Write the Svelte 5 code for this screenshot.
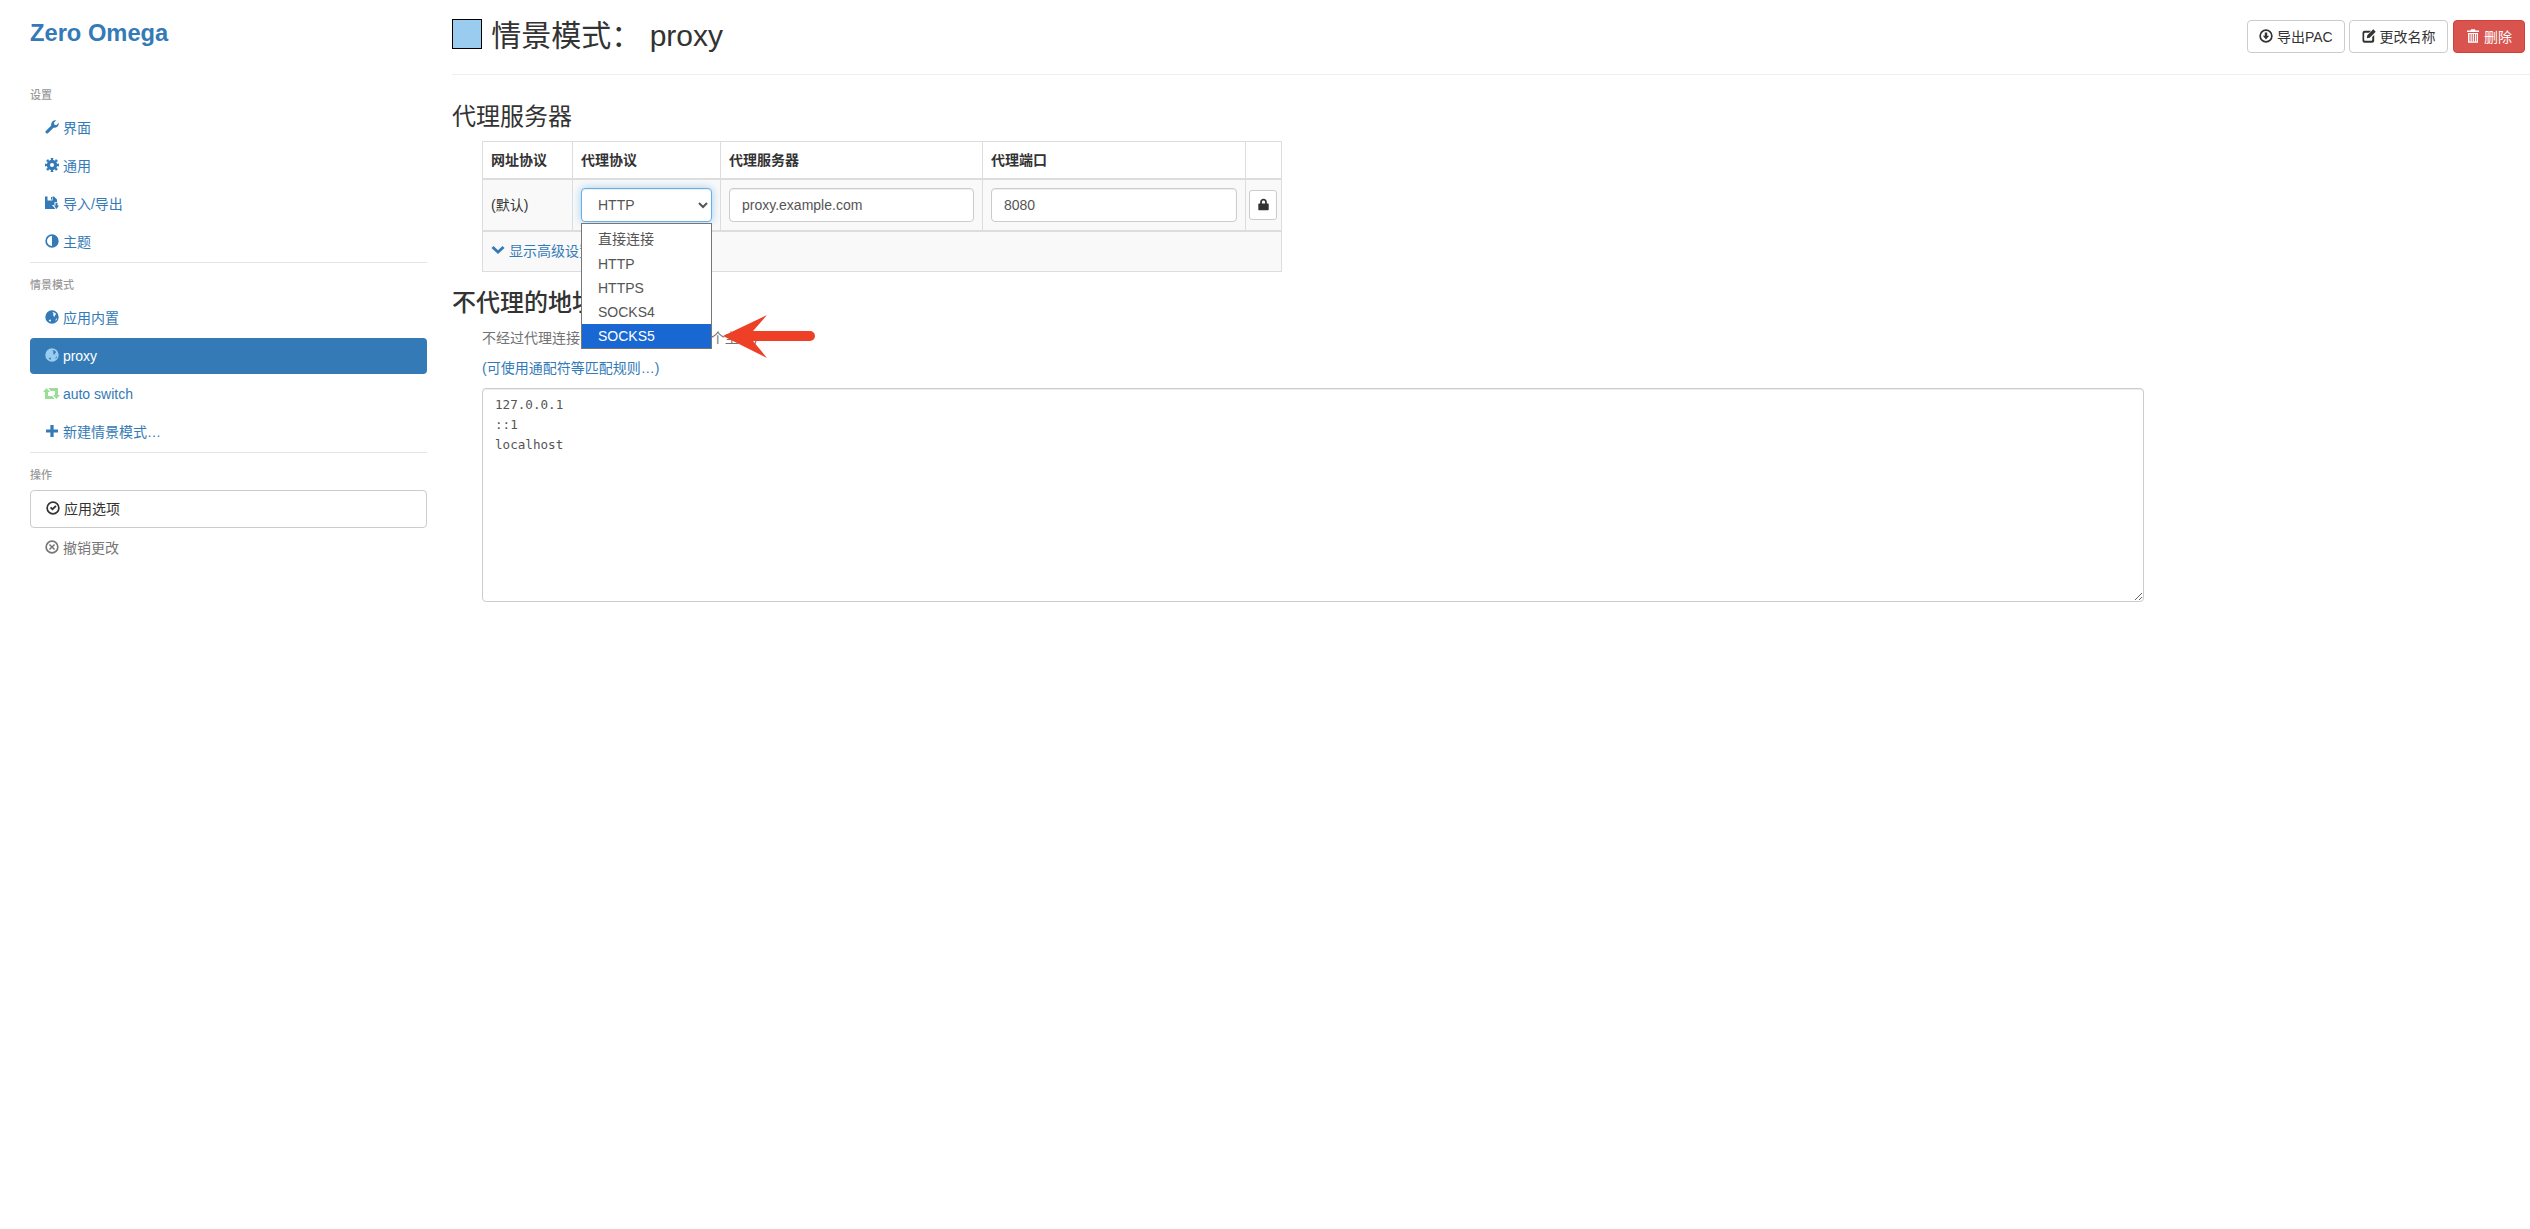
<script lang="ts">
	// Glyph-style icons, all on a 14 unit grid and filled with currentColor
	function cogPath() {
		let d = '';
		for (let i = 0; i < 16; i++) {
			const a = ((i - 0.55) * Math.PI) / 8;
			const r = i % 2 === 0 ? 7.2 : 5.3;
			const b = ((i + 0.55) * Math.PI) / 8;
			d += `${i === 0 ? 'M' : 'L'}${(7 + r * Math.cos(a)).toFixed(2)} ${(7 + r * Math.sin(a)).toFixed(2)}L${(7 + r * Math.cos(b)).toFixed(2)} ${(7 + r * Math.sin(b)).toFixed(2)}`;
		}
		return d + 'ZM7 5a2 2 0 1 0 0 4a2 2 0 0 0 0-4Z';
	}

	const RING = 'M7 .3a6.7 6.7 0 1 0 0 13.4a6.7 6.7 0 0 0 0-13.4ZM7 2a5 5 0 1 1 0 10a5 5 0 0 1 0-10Z';

	const ICONS: Record<string, string> = {
		wrench: 'M.4 11.4 6.200 5.600C5.600 2.800 7.800 0 11.200.3L8.900 2.800l.5 1.900 1.900.5 2.400-2.400C14.100 6 11.400 8.200 8.500 7.700l-5.800 5.800C1.600 13.800.100 12.500.4 11.400Z',
		cog: cogPath(),
		save: 'M0 .5H2.500V4.500H7.500V.5H9L12 3.500V6H9.500V9H7L10.500 13H0ZM6 1H7V3.500H6ZM10.500 6.800H12.500V9.500H14L11.500 13 9 9.500H10.500Z',
		adjust: 'M7 .3a6.7 6.7 0 1 0 0 13.4a6.7 6.7 0 0 0 0-13.4ZM7 2a5 5 0 0 0 0 10Z',
		globe: 'M7 .3a6.700 6.700 0 1 0 0 13.400a6.700 6.700 0 0 0 0-13.400ZM7.500 2c1.600.1 3 1 3.500 2 .1.800-.9 1-1.300 1.600.2.800-.1 1.300-.7 1.200-.4-.6-.3-1.300-1-1.500-.1-.6.5-.9.6-1.400C8.400 3.200 7.700 2.800 7.500 2ZM11.300 8.600c.3 0 .6.100.7.300-.3.800-.8 1.500-1.400 2-.1-.9.100-1.700.7-2.300ZM5.500 9.500c.4.200.5.600.4 1-.2.400-.3.800-.2 1.300-.9-.3-1.600-.8-2-1.500.6-.4 1.200-.7 1.800-.8Z',
		retweet: 'M3.500 2 7 6H5V10H9.300L11.600 13H2V6H0ZM5.400 2H15V9H17L13.500 13 10 9H12V5H7.700Z',
		plus: 'M5.400 1h3.200v4.400H13v3.200H8.600V13H5.400V8.600H1V5.400h4.400Z',
		okCircle: RING + 'M3.900 7l1.300-1.300 1.300 1.300 2.800-2.800L10.600 5.500 6.500 9.600Z',
		removeCircle: RING + 'M5 3.900 7 5.900l2-2L10.100 5l-2 2 2 2L9 10.100l-2-2-2 2L3.900 9l2-2-2-2Z',
		chevron: 'M.5 5 2.500 3 7 7.200 11.500 3 13.500 5 7 11Z',
		lock: 'M7 .8c-2.200 0-3.600 1.500-3.600 3.700V6H2.200c-.5 0-.8.300-.8.800v5.600c0 .5.300.8.800.8h9.600c.5 0 .8-.300.8-.800V6.800c0-.5-.300-.8-.8-.8h-1.200V4.500C10.600 2.300 9.200.8 7 .8ZM5.300 6V4.500C5.300 3.300 5.900 2.600 7 2.600s1.700.7 1.700 1.900V6Z',
		exportPac: RING + 'M5.800 3.400h2.400v3.400h2L7 10.400 3.800 6.800h2Z',
		edit: 'M2.500 1.800H9L7 3.800H3c-.5 0-.8.300-.8.800v6.400c0 .5.300.8.800.8h6.400c.5 0 .8-.300.8-.800V8l2-2v5.700c0 1.100-.9 2-2 2H2.500c-1.100 0-2-.9-2-2V3.800c0-1.100.9-2 2-2ZM11.300.3 13.700 2.700 7.700 8.700 4.800 9.200 5.300 6.300Z',
		trash: 'M5 .3h4l.6 1.200H13v1.500H1V1.500h3.400ZM2 4h10v9.700H2ZM3.500 5v7.500h1V5ZM5.700 5v7.500h1V5ZM7.900 5v7.500h1V5ZM10 5v7.500h.700V5Z'
	};

	const settingsNav = [
		{ icon: 'wrench', label: '界面' },
		{ icon: 'cog', label: '通用' },
		{ icon: 'save', label: '导入/导出' },
		{ icon: 'adjust', label: '主题' }
	];
	const profiles = [
		{ icon: 'globe', label: '应用内置' },
		{ icon: 'globe', label: 'proxy', active: true, tint: 'sky' },
		{ icon: 'retweet', label: 'auto switch', tint: 'green' },
		{ icon: 'plus', label: '新建情景模式…' }
	];
	const protocols = ['直接连接', 'HTTP', 'HTTPS', 'SOCKS4', 'SOCKS5'];
	const bypass = '127.0.0.1\n::1\nlocalhost';
</script>

{#snippet icon(name, cls = '')}
	<svg class="icon {cls}" viewBox={name === 'retweet' ? '0 0 17 14' : '0 0 14 14'} aria-hidden="true">
		<path fill-rule="evenodd" d={ICONS[name]} />
	</svg>
{/snippet}

<div class="page">
	<aside class="sidebar">
		<div class="brand">Zero Omega</div>

		<div class="nav-header">设置</div>
		<ul class="nav">
			{#each settingsNav as item}
				<li><a href="#top">{@render icon(item.icon)} {item.label}</a></li>
			{/each}
		</ul>
		<div class="divider"></div>

		<div class="nav-header">情景模式</div>
		<ul class="nav">
			{#each profiles as item}
				<li class:active={item.active}>
					<a href="#top">{@render icon(item.icon, item.tint)} {item.label}</a>
				</li>
			{/each}
		</ul>
		<div class="divider"></div>

		<div class="nav-header">操作</div>
		<button class="apply">{@render icon('okCircle')} 应用选项</button>
		<a class="discard" href="#top">{@render icon('removeCircle')} 撤销更改</a>
	</aside>

	<main class="content">
		<header class="page-header">
			<h1><span class="swatch"></span> 情景模式： proxy</h1>
			<div class="actions">
				<button class="btn export">{@render icon('exportPac')} 导出PAC</button>
				<button class="btn rename">{@render icon('edit')} 更改名称</button>
				<button class="btn btn-danger">{@render icon('trash')} 删除</button>
			</div>
		</header>

		<h3 class="first">代理服务器</h3>
		<div class="indent">
			<table>
				<colgroup>
					<col class="c1" /><col class="c2" /><col class="c3" /><col class="c4" /><col class="c5" />
				</colgroup>
				<thead>
					<tr>
						<th>网址协议</th>
						<th>代理协议</th>
						<th>代理服务器</th>
						<th>代理端口</th>
						<th></th>
					</tr>
				</thead>
				<tbody>
					<tr>
						<td>(默认)</td>
						<td class="select-cell">
							<select class="control focus">
								{#each protocols as p}
									<option selected={p === 'HTTP'}>{p}</option>
								{/each}
							</select>
							<div class="dropdown">
								{#each protocols as p}
									<div class="opt" class:sel={p === 'SOCKS5'}>{p}</div>
								{/each}
							</div>
						</td>
						<td><input class="control" value="proxy.example.com" /></td>
						<td><input class="control" value="8080" /></td>
						<td class="lock-cell"><button class="lock">{@render icon('lock')}</button></td>
					</tr>
				</tbody>
				<tfoot>
					<tr>
						<td colspan="5"><a href="#top">{@render icon('chevron')} 显示高级设置</a></td>
					</tr>
				</tfoot>
			</table>
		</div>

		<h3 class="second">不代理的地址列表</h3>
		<div class="indent bypass">
			<p class="help">不经过代理连接的主机列表：(每行一个主机)</p>
			<p class="wild"><a href="#top">(可使用通配符等匹配规则…)</a></p>
			<textarea spellcheck="false" value={bypass}></textarea>
			<svg class="pointer" viewBox="0 0 92 43" aria-hidden="true">
				<path d="M0 21 44 0 30 16H87a5 5 0 0 1 0 10H30L44 43Z" />
			</svg>
		</div>
	</main>
</div>

<style>
	:global(body) {
		margin: 0;
		background: #fff;
		font-family: "Liberation Sans", "Noto Sans CJK SC", sans-serif;
		font-size: 14px;
		line-height: 20px;
		color: #333;
	}
	a {
		color: #337ab7;
		text-decoration: none;
	}
	.icon {
		display: inline-block;
		width: 14px;
		height: 14px;
		fill: currentColor;
		vertical-align: -1px;
	}
	.icon.sky {
		fill: #99ccee;
	}
	.icon.green {
		width: 17px;
		fill: #99dd99;
		margin-left: -2px;
		margin-right: -1px;
	}
	.page {
		display: flex;
		min-height: 1229px;
	}

	/* sidebar */
	.sidebar {
		width: 397px;
		margin-left: 30px;
		flex: none;
	}
	.brand {
		font-size: 23.7px;
		font-weight: 700;
		line-height: 26px;
		color: #337ab7;
		margin-top: 20px;
	}
	.nav-header {
		font-size: 11px;
		line-height: 16px;
		color: #999;
		font-weight: 500;
	}
	.brand + .nav-header {
		margin-top: 41px;
	}
	.nav {
		list-style: none;
		margin: 7px 0 0;
		padding: 0;
	}
	.nav li + li {
		margin-top: 2px;
	}
	.nav a {
		display: block;
		padding: 8px 15px;
		border-radius: 4px;
	}
	.nav li.active a {
		background: #337ab7;
		color: #fff;
	}
	.divider {
		height: 1px;
		background: #e5e5e5;
		margin: 2px 0 14px;
	}
	.apply {
		display: block;
		box-sizing: border-box;
		width: 100%;
		height: 38px;
		margin-top: 7px;
		padding: 0 15px;
		text-align: left;
		font: inherit;
		color: #333;
		background: #fff;
		border: 1px solid #ccc;
		border-radius: 4px;
	}
	.discard {
		display: block;
		margin-top: 2px;
		padding: 8px 15px;
		color: #777;
	}

	/* main */
	.content {
		flex: 1;
		margin-left: 25px;
		min-width: 0;
	}
	.page-header {
		display: flex;
		justify-content: space-between;
		align-items: flex-start;
		height: 74px;
		border-bottom: 1px solid #eee;
	}
	h1 {
		margin: 19px 0 0;
		font-size: 30px;
		line-height: 33px;
		font-weight: 400;
	}
	.swatch {
		display: inline-block;
		box-sizing: border-box;
		width: 30px;
		height: 30px;
		background: #99ccee;
		border: 1px solid #000;
		vertical-align: -3px;
		margin-right: 1px;
	}
	.actions {
		display: flex;
		gap: 4px;
		margin: 20px 5px 0 0;
	}
	.btn {
		height: 33px;
		padding: 0 12px;
		font: inherit;
		color: #333;
		background: #fff;
		border: 1px solid #ccc;
		border-radius: 4px;
	}
	.btn.export {
		padding: 0 11.5px;
	}
	.btn.rename {
		padding: 0 11.5px;
	}
	.btn-danger {
		margin-left: 1px;
		color: #fff;
		background: #d9534f;
		border-color: #d43f3a;
	}
	h3 {
		margin: 0;
		font-size: 24px;
		line-height: 26px;
		font-weight: 400;
	}
	h3.first {
		margin-top: 29px;
		margin-bottom: 11px;
	}
	h3.second {
		margin-top: 18px;
		margin-bottom: 12px;
		font-weight: 500;
	}
	.indent {
		margin-left: 30px;
	}
	table {
		width: 799px;
		table-layout: fixed;
		border-collapse: collapse;
		border: 1px solid #ddd;
	}
	.c1 { width: 90px; }
	.c2 { width: 148px; }
	.c3 { width: 262px; }
	.c4 { width: 263px; }
	.c5 { width: 36px; }
	th, td {
		padding: 8px;
		border: 1px solid #ddd;
		text-align: left;
		vertical-align: middle;
	}
	th {
		font-weight: 700;
		border-bottom-width: 2px;
	}
	tbody td {
		background: #f9f9f9;
		border-bottom-width: 2px;
	}
	tfoot td {
		background: #f9f9f9;
		padding: 9px 8px 10px;
	}
	.select-cell {
		position: relative;
	}
	.control {
		display: block;
		box-sizing: border-box;
		width: 100%;
		height: 34px;
		padding: 6px 12px;
		font: inherit;
		color: #555;
		background: #fff;
		border: 1px solid #ccc;
		border-radius: 4px;
		box-shadow: inset 0 1px 1px rgba(0, 0, 0, 0.075);
	}
	.control.focus {
		border-color: #66afe9;
		box-shadow: inset 0 1px 1px rgba(0, 0, 0, 0.075), 0 0 8px rgba(102, 175, 233, 0.6);
	}
	.dropdown {
		position: absolute;
		z-index: 2;
		left: 8px;
		top: 43px;
		box-sizing: border-box;
		width: 131px;
		background: #fff;
		border: 1px solid #767676;
		color: #555;
	}
	.opt {
		height: 24px;
		padding-left: 16px;
		line-height: 24px;
	}
	.opt:first-child {
		height: 28px;
		line-height: 30px;
	}
	.opt.sel {
		background: #1967d2;
		color: #fff;
	}
	.lock-cell {
		padding: 0 3px;
	}
	.lock {
		display: block;
		box-sizing: border-box;
		width: 28px;
		height: 30px;
		padding: 0;
		color: #333;
		background: #fff;
		border: 1px solid #ccc;
		border-radius: 3px;
	}
	.lock .icon {
		width: 13px;
		height: 13px;
		vertical-align: -1px;
	}
	.bypass {
		position: relative;
	}
	p {
		margin: 0 0 10px;
	}
	.help {
		color: #737373;
	}
	textarea {
		display: block;
		box-sizing: border-box;
		width: 1662px;
		height: 214px;
		padding: 6px 12px;
		font-family: "DejaVu Sans Mono", monospace;
		font-size: 12.6px;
		line-height: 20px;
		color: #555;
		background: #fff;
		border: 1px solid #ccc;
		border-radius: 4px;
		box-shadow: inset 0 1px 1px rgba(0, 0, 0, 0.075);
	}
	.pointer {
		position: absolute;
		z-index: 3;
		left: 241px;
		top: -13px;
		width: 92px;
		height: 43px;
		fill: #ee4026;
	}
</style>
